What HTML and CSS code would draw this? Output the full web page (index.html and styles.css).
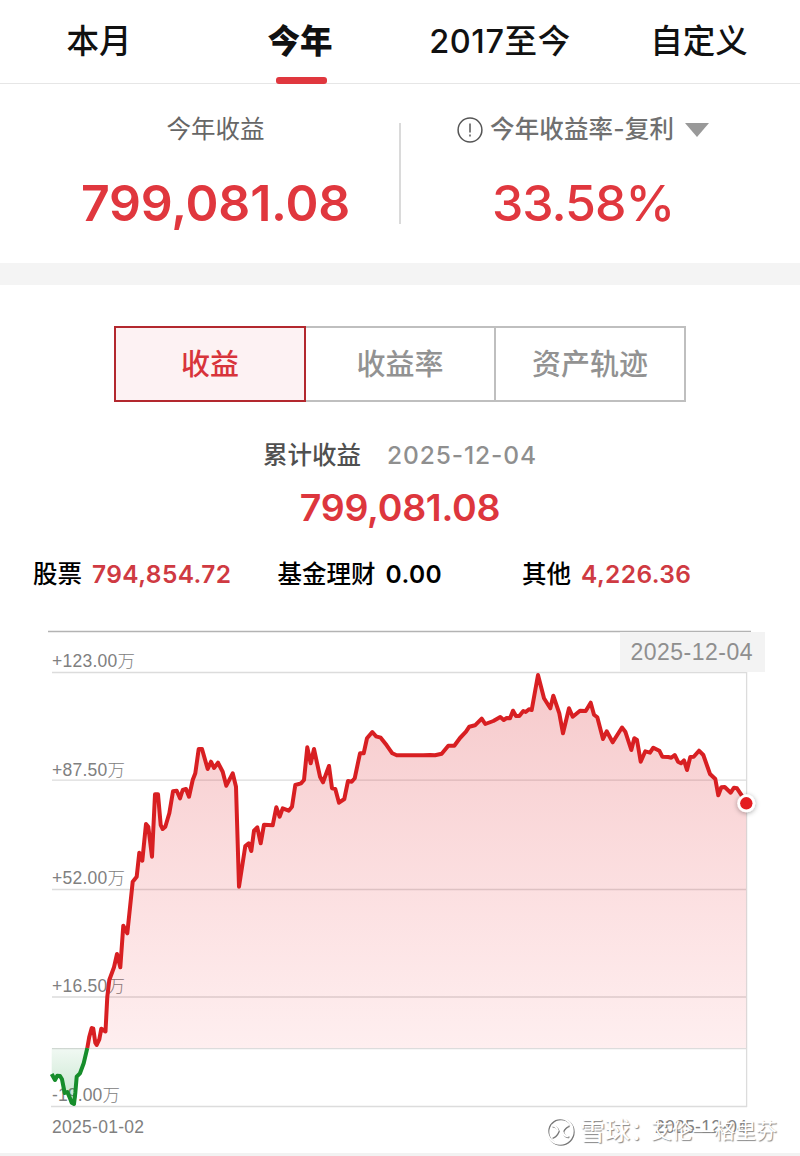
FILE: index.html
```html
<!DOCTYPE html>
<html lang="zh-CN">
	<head>
		<meta charset="UTF-8">
		<title>收益</title>
		<link rel="stylesheet" href="styles.css">
	</head>
	<body>
		<div class="page">
			<ul class="tabs">
				<li>本月</li>
				<li class="on">今年</li>
				<li class="year">2017至今</li>
				<li>自定义</li>
			</ul>
			<div class="total">
				<div class="item">
					<p class="name">今年收益</p>
					<p class="num">799,081.08</p>
				</div>
				<div class="item rate">
					<p class="name">
						<svg class="info" width="26" height="26" viewBox="0 0 26 26"><circle cx="13" cy="13" r="11.9"/><path d="M13 6.6v9"/><path d="M13 17.6v1.8"/></svg>
						<span>今年收益率-复利</span>
						<svg class="arrow" width="24" height="14" viewBox="0 0 24 14"><path d="M0 0h24L12 14z"/></svg>
					</p>
					<p class="num">33.58%</p>
				</div>
			</div>
			<div class="gap"></div>
			<ul class="switch">
				<li class="on">收益</li>
				<li>收益率</li>
				<li>资产轨迹</li>
			</ul>
			<div class="sum">
				<p class="day"><span>累计收益</span><em>2025-12-04</em></p>
				<p class="money">799,081.08</p>
			</div>
			<ul class="detail">
				<li><span>股票</span><b>794,854.72</b></li>
				<li><span>基金理财</span><b class="zero">0.00</b></li>
				<li><span>其他</span><b>4,226.36</b></li>
			</ul>
			<div class="chart">
				<svg width="800" height="536" viewBox="0 620 800 536">
					<defs>
						<linearGradient id="red" gradientUnits="userSpaceOnUse" x1="0" y1="675" x2="0" y2="1048">
							<stop offset="0" stop-color="#d61f26" stop-opacity=".24"/>
							<stop offset="1" stop-color="#f5303a" stop-opacity=".08"/>
						</linearGradient>
						<linearGradient id="green" gradientUnits="userSpaceOnUse" x1="0" y1="1048" x2="0" y2="1105">
							<stop offset="0" stop-color="#17983a" stop-opacity=".06"/>
							<stop offset="1" stop-color="#17983a" stop-opacity=".26"/>
						</linearGradient>
						<filter id="shadow" x="-50%" y="-50%" width="200%" height="200%">
							<feDropShadow dx="0" dy="1" stdDeviation="2.5" flood-color="#000" flood-opacity=".35"/>
						</filter>
					</defs>
					<path class="topline" d="M48 631.5H751"/>
					<!-- 网格 -->
					<path class="grid" d="M52 672.5H747M52 780.2H747M52 889.5H747M52 997H747M52 1048.7H747M51 1106.5H747M746.6 672V1107"/>
					<!-- 刻度 -->
					<g class="label">
						<text x="52" y="667" textLength="83">+123.00万</text>
						<text x="52" y="775.5" textLength="73">+87.50万</text>
						<text x="52" y="884" textLength="73">+52.00万</text>
						<text x="52" y="992" textLength="73">+16.50万</text>
						<text x="52" y="1101" textLength="68">-19.00万</text>
						<text x="52" y="1133" textLength="92">2025-01-02</text>
						<text x="655" y="1133" textLength="92">2025-12-04</text>
					</g>
					<path id="area1" fill="url(#green)"/>
					<path id="area2" fill="url(#red)"/>
					<path id="line1" class="line down"/>
					<path id="line2" class="line up"/>
					<rect x="620" y="632" width="145" height="40" fill="#f3f3f3"/>
					<text class="tip" x="630.5" y="660" textLength="122">2025-12-04</text>
					<circle cx="746.3" cy="803.3" r="9" fill="#fff" filter="url(#shadow)"/>
					<circle cx="746.3" cy="803.3" r="6.2" fill="#e41c20"/>
				</svg>
				<div class="mark">
					<svg width="28" height="28" viewBox="0 0 28 28"><circle cx="14" cy="14" r="12.7"/><path d="M5.500 8.500C9 8.500 11 11 11.800 13.500C10.500 16.500 8.500 19 5.500 20M22.500 8C19.500 9 17.500 11 16.200 14C17 17 19 19.500 22.500 19.500"/></svg>
					<span class="brand">雪球：</span>
					<span class="user">艾伦—格里芬</span>
				</div>
			</div>
		</div>
		<script>
			//零轴以下
			const down='51.7,1074 55,1080 57.3,1075.7 60,1076 62,1079.3 64.7,1093 67.3,1092 70,1098.3 71.7,1102.7 74,1104 75.3,1093 76.7,1076.7 80,1073.3 83.7,1063.3 87.3,1048';
			//零轴以上
			const up='87.3,1048 89.3,1036.7 91.7,1028 93.3,1028.7 95.3,1042.7 96.7,1045 99.3,1039.3 101.3,1028.7 105.5,1031.5 107.3,996.7 109.3,980 114,967.3 117,954 120.3,967.3 123.3,925.7 127.3,933.3 132.7,881.7 136.7,876.7 139.3,852.7 142.3,860.7 146,824 148.3,826.7 152,856.7 155,794.3 158,794.3 160.7,825 162.7,829 165.3,826.7 169.3,813.3 173,791.3 176.7,790.7 180,798.3 182.7,790 186,789 189,796.7 192.7,780 195.3,773.3 198.7,749 202,749 207.7,769 211,761.7 214,768 218,762.7 222.7,771.7 226.3,785.7 232.7,773.3 236,786.7 239,886.7 '
				+'245.3,846 248.7,843.3 251.3,851 254,830.7 257.3,827.3 260.7,843.3 264,824.7 272.7,825.3 276.3,807.3 279.7,816.7 282.7,808.3 288.7,810.7 292,806.7 295.3,785 301,783.3 304,780 307.3,747.3 310.7,763.3 314,749 320,776.7 323,782.3 329,766 332,788.3 335.3,789 339,802.7 344.3,799 348,781 351.7,781.7 354.7,778.3 360,753.3 363.7,753.3 367,738.3 372.3,732 376,736.3 380.7,737.7 386.7,745.3 392.3,753.3 396.7,755.3 423.3,755.3 430,755 435,755.3 441.7,753.7 448.3,745.7 454.3,745.7 460,738 '
				+'466,731.7 469.3,726.7 475,725.3 481.7,718.7 485.3,724 493.3,721 500.3,717 503.7,720 506.7,718 510,718.3 513,710.7 516,716 519.3,716 523.3,711 525.7,712 529,709.3 531.7,710 538,675 544,698.3 550.3,708.3 553.3,695.7 559.3,713.3 563,733.3 569,708.3 572.7,716.7 580,710.7 585.7,711 590.7,702.7 594,714.7 597.3,717.3 603,739 606.7,731.3 612.7,742.3 '
				+'622,727.5 625.3,731.7 631.3,750 634.3,738.3 637,740 640.7,761.7 645.3,751.3 650,752.7 653.3,747.7 659.3,750.7 662.3,756.7 668.3,757 671.3,757.7 674.7,755 678,761.7 681,763.3 684,760.3 687,770 690.3,757 693.7,756.7 699,750.7 703.3,755 710,774 715.3,779 718.3,795.3 721.3,787.3 724.7,787 730.7,792.7 734,787.7 737,788.3 741,794.3 746.3,803.3';
			draw(down,'line1','area1');
			draw(up,'line2','area2');

			function draw(points,line,area){
				const list=points.split(' ');
				const first=list[0].split(',')[0];
				const last=list[list.length-1].split(',')[0];
				document.getElementById(line).setAttribute('d','M'+list.join('L'));
				document.getElementById(area).setAttribute('d','M'+first+',1048L'+list.join('L')+'L'+last+',1048Z');
			}
		</script>
	</body>
</html>
```
FILE: styles.css
```css
*{padding: 0;margin: 0;box-sizing: border-box;}
li{list-style: none;}
em{font-style: normal;}
body{background: #fff;font-family: "Inter","Noto Sans CJK SC",sans-serif;color: #111;}
.page{width: 800px;height: 1156px;overflow: hidden;}
/*顶部切换*/
.tabs{display: flex;height: 84px;border-bottom: 1px solid #e6e6e6;}
.tabs li{width: 200px;height: 84px;line-height: 84px;text-align: center;font-size: 32.500px;font-weight: 500;position: relative;padding-right: 2px;}
.tabs .on{font-weight: 800;padding: 0;}
.tabs .on:after{content: "";position: absolute;left: 76px;bottom: 0;width: 51px;height: 7px;border-radius: 3px;background: #e0373e;}
.tabs .year{padding: 0;letter-spacing: .6px;}
/*总收益*/
.total{display: flex;height: 179px;padding-top: 27px;}
.item{width: 400px;text-align: center;padding-left: 31px;}
.item .name{height: 36px;line-height: 36px;font-size: 24.500px;color: #666;}
.item .num{margin-top: 28px;height: 56px;line-height: 56px;font-size: 50px;font-weight: 600;letter-spacing: -.2px;color: #e0373e;}
.rate{position: relative;padding: 0;}
.rate:before{content: "";position: absolute;left: -1px;top: 12px;width: 2px;height: 101px;background: #dadada;}
.rate .name{display: flex;align-items: center;padding-left: 57px;font-weight: 500;color: #707070;}
.rate .name svg{margin-top: 2px;}
.rate .name span{margin: 0 11px 0 7px;letter-spacing: .15px;}
.rate .num{padding-right: 34px;font-weight: 500;letter-spacing: -1px;}
.info{fill: none;stroke: #555;stroke-width: 1.500;}
.arrow{fill: #999;}
.gap{height: 22px;background: #f4f4f4;}
/*类型*/
.switch{display: flex;width: 572px;height: 76px;margin: 41px auto 0 114px;}
.switch li{width: 190px;height: 76px;line-height: 74px;text-align: center;font-size: 29px;font-weight: 500;color: #929292;border: 2px solid #bfbfbf;border-left: 0;}
.switch .on{width: 192px;color: #d8343b;background: #fdf2f3;border: 2px solid #b3282e;}
.sum{text-align: center;padding-top: 35px;}
.day{height: 36px;line-height: 36px;font-size: 24.500px;font-weight: 500;color: #505050;}
.day em{margin-left: 26px;color: #8f8f8f;letter-spacing: .9px;}
.money{margin-top: 13px;height: 44px;line-height: 44px;font-size: 37.500px;font-weight: 600;letter-spacing: -.3px;color: #dd363d;}
.detail{display: flex;padding: 25px 0 0 33px;height: 90px;}
.detail li{display: flex;width: 244.500px;height: 38px;line-height: 38px;font-size: 24.500px;font-weight: 500;color: #000;}
.detail b{margin-left: 10px;font-weight: 600;letter-spacing: .4px;color: #cf3a42;}
.detail .zero{color: #000;}
/*曲线图*/
.chart{position: relative;height: 536px;border-bottom: 3px solid #f2f2f2;}
.chart>svg{display: block;}
.topline{stroke: #b3b3b3;stroke-width: 1.500;}
.grid{fill: none;stroke: #dcdcdc;stroke-width: 1.300;}
.label,.tip{font-family: "Liberation Sans","Noto Sans CJK SC",sans-serif;}
.label{font-size: 17.500px;font-weight: 300;fill: #808080;}
.tip{font-size: 23px;fill: #8f8f8f;}
.line{fill: none;stroke-width: 4;stroke-linejoin: round;}
.up{stroke: #d81f22;}
.down{stroke: #168d2b;}
/*水印*/
.mark{position: absolute;left: 546px;top: 497px;display: flex;align-items: center;height: 28px;line-height: 28px;font-size: 25px;color: #fff;white-space: nowrap;text-shadow: 1px 1px 1px #888;}
.mark svg{fill: none;stroke: #fff;stroke-width: 2;filter: drop-shadow(1px 1px .6px #777);}
.mark .brand{margin-left: 6px;width: 71px;font-weight: 500;}
.mark .user{font-size: 21px;}
```
